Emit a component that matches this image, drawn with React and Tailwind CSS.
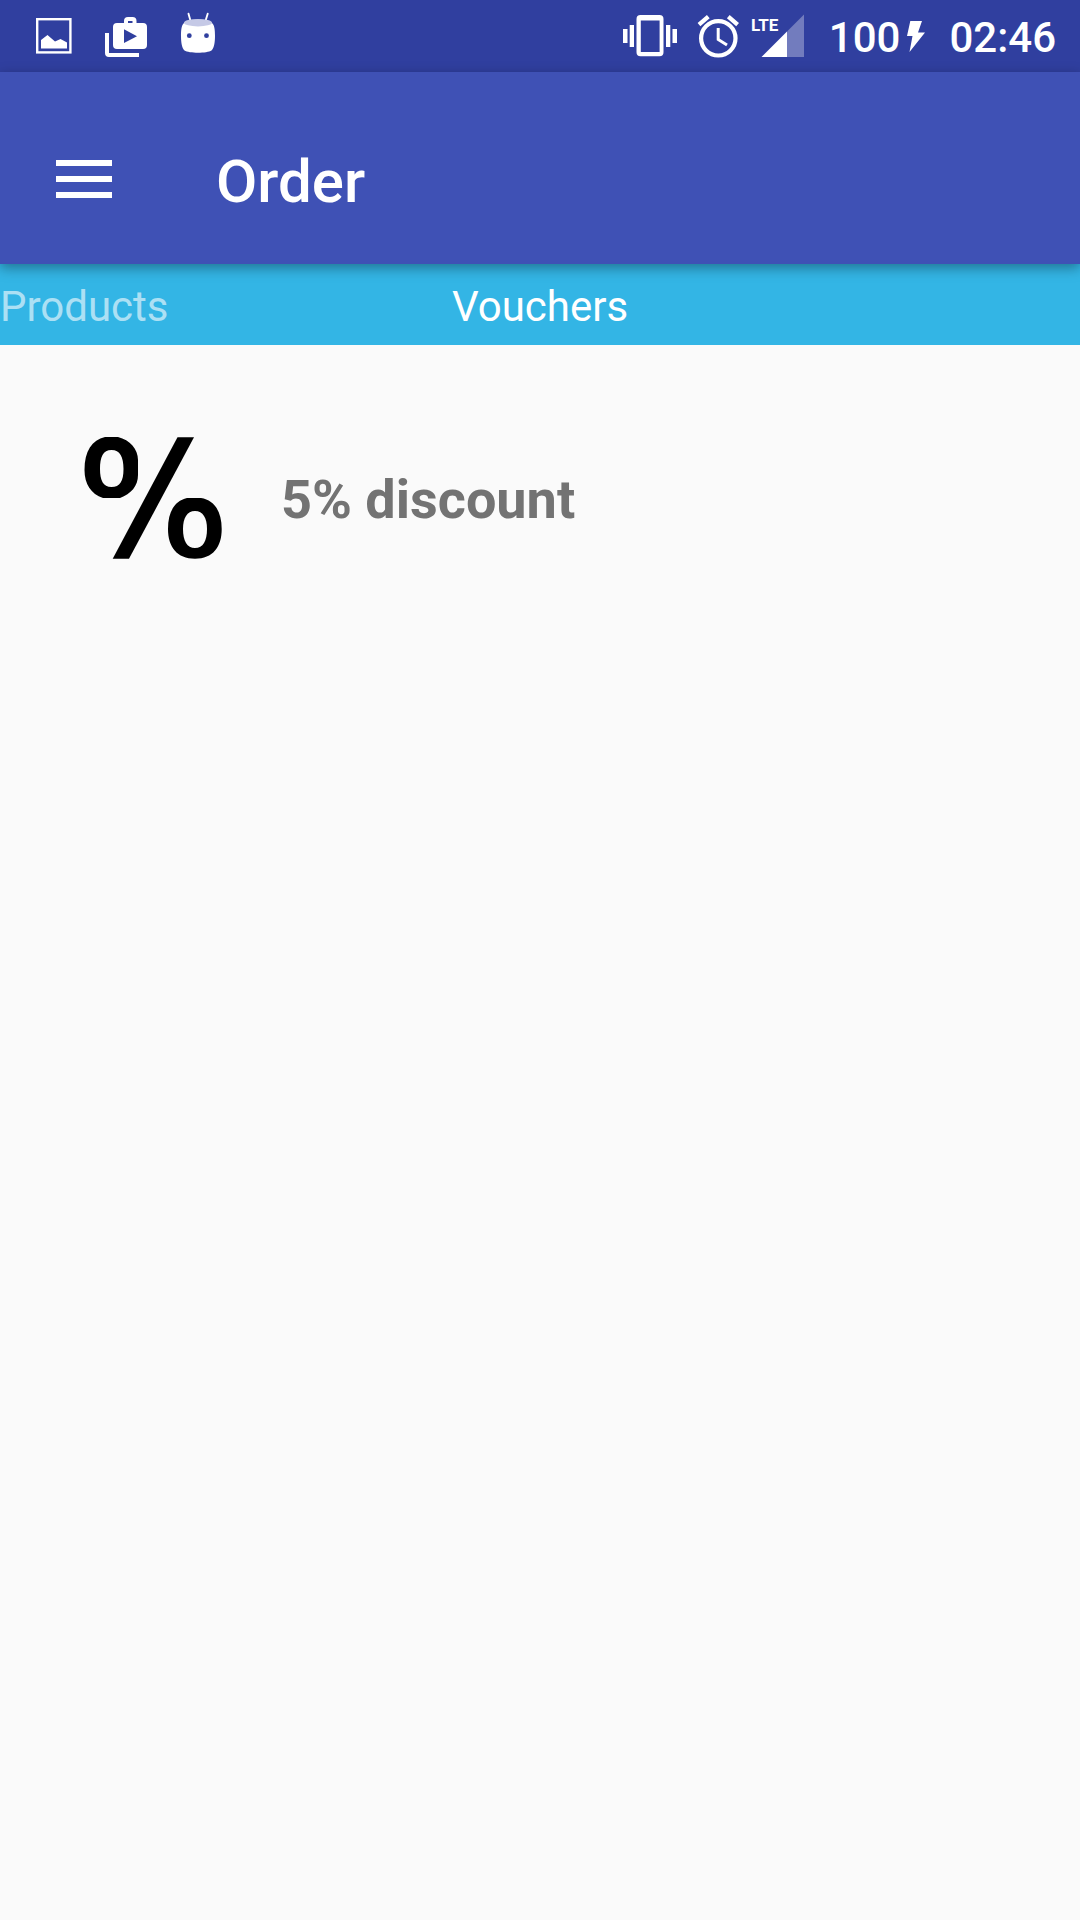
import React from "react";

function ImageIcon() {
  return (
    <svg className="h-12 w-12" viewBox="0 0 48 48" fill="none" aria-hidden="true">
      <rect x="7.2" y="7.2" width="33.2" height="33.2" stroke="#fff" strokeWidth="2.4" />
      <path d="M11 36.5V28L17.5 23L25 29.5L30.5 27L37 30.5V36.5Z" fill="#fff" />
    </svg>
  );
}

function ShopIcon() {
  return (
    <svg className="h-12 w-12" viewBox="0 0 48 48" fill="#fff" aria-hidden="true">
      <path d="M3 21H7V41H37V45H7A4 4 0 0 1 3 41Z" />
      <path
        fillRule="evenodd"
        d="M22 11V9A4 4 0 0 1 26 5H30.5A4 4 0 0 1 34.5 9V11H41A4 4 0 0 1 45 15V33A4 4 0 0 1 41 37H15A4 4 0 0 1 11 33V15A4 4 0 0 1 15 11ZM26 9V11H30.5V9ZM22 17.3V31L35 24.2Z"
      />
    </svg>
  );
}

function RobotIcon() {
  return (
    <svg className="h-12 w-12" viewBox="0 0 48 48" aria-hidden="true">
      <path d="M16.7 9.5L14.5 1.7M31.3 9.5L33.7 1.7" stroke="#fff" strokeWidth="1.9" strokeLinecap="round" />
      <path d="M10 11C14 6.500 34 6.500 38 11C40.5 13 41 18 41 24C41 31 40 36 37.5 38.500C33 41.500 15 41.500 10.5 38.5C8 36 7 31 7 24C7 18 7.5 13 10 11Z" fill="#fff" />
      <ellipse cx="24" cy="10.7" rx="14" ry="3.7" fill="#c5c9e6" />
      <circle cx="15.3" cy="23.7" r="2.4" fill="#303f9f" />
      <circle cx="32.5" cy="23.7" r="2.4" fill="#303f9f" />
    </svg>
  );
}

function VibrateIcon() {
  return (
    <svg className="h-12 w-[54px]" viewBox="0 0 54 48" fill="#fff" aria-hidden="true">
      <path d="M0 17H4.5V31H0ZM6.7 13H11V35H6.7ZM43 13H47.3V35H43ZM49.5 17H54V31H49.5Z" />
      <path
        fillRule="evenodd"
        d="M17.5 3H36.5A4 4 0 0 1 40.5 7V40.3A4 4 0 0 1 36.5 44.3H17.5A4 4 0 0 1 13.5 40.3V7A4 4 0 0 1 17.5 3ZM17.8 8.6V40H36.6V8.6Z"
      />
    </svg>
  );
}

function AlarmIcon() {
  return (
    <svg className="h-12 w-11" viewBox="0 0 44 48" fill="none" stroke="#fff" aria-hidden="true">
      <circle cx="21.3" cy="26.3" r="17.2" strokeWidth="4.2" />
      <path d="M21.2 16V27.5L30 33" strokeWidth="3" />
      <path d="M2 12.7L11.3 4.6M31.3 4.6L40.6 12.7" strokeWidth="4.2" />
    </svg>
  );
}

function SignalIcon() {
  return (
    <svg className="h-12 w-[54px]" viewBox="0 0 54 48" role="img" aria-label="LTE signal">
      <path d="M53 2.5V45H36V19.5Z" fill="#fff" fillOpacity="0.32" />
      <path d="M10.5 45L36 19.5V45Z" fill="#fff" />
      <text x="0" y="19" fill="#fff" className="text-[17px] font-bold">
        LTE
      </text>
    </svg>
  );
}

function BoltIcon() {
  return (
    <svg className="h-12 w-[18px]" viewBox="0 0 18 48" fill="#fff" aria-hidden="true">
      <path d="M3.3 9H15L11 20.5H18L2.5 40L5.5 24H0Z" />
    </svg>
  );
}

function PercentIcon() {
  return (
    <svg className="size-36 shrink-0" viewBox="0 0 144 144" fill="#000" aria-hidden="true">
      <path
        fillRule="evenodd"
        d="M24 11H37C49 14 57 23 57 34V49C57 60 50 68 39 72H22C10 68 3.5 58 3.5 44C3.5 25 11 14 24 11ZM30.5 24C22 24 19 31 19 43C19 54 22 61 30.5 61C39 61 42.5 55 42.5 43C42.5 31 39 24 30.5 24Z"
      />
      <path d="M96.5 11.3H113L48 132.7H31.7Z" />
      <path
        fillRule="evenodd"
        d="M106 72H120C133 74 140.7 85 140.7 103C140.7 121 132 132.7 114 132.7C96 132.7 87 121 87 103C87 85 94 75 106 72ZM114 85C106 85 102 92 102 103C102 115 106 122 114 122C122 122 126 115 126 103C126 92 122 85 114 85Z"
      />
    </svg>
  );
}

function StatusBar() {
  return (
    <div className="flex h-[72px] items-center justify-between bg-[#303f9f] pr-6 pl-[30px] text-[42px] leading-[48px] font-medium text-white">
      <div className="flex gap-6">
        <ImageIcon />
        <ShopIcon />
        <RobotIcon />
      </div>
      <div className="flex items-center">
        <VibrateIcon />
        <div className="ml-5 flex gap-2.5">
          <AlarmIcon />
          <SignalIcon />
        </div>
        <span className="mt-1 ml-6">100</span>
        <span className="mr-6 ml-[7px]">
          <BoltIcon />
        </span>
        <span className="mt-1">02:46</span>
      </div>
    </div>
  );
}

function AppBar() {
  return (
    <header className="relative z-10 flex h-48 items-center bg-[#3f51b5] pt-6 pl-14 text-white shadow-[0_4px_12px_rgba(0,0,0,0.36)]">
      <button type="button" aria-label="Open menu">
        <svg className="h-[72px] w-14" viewBox="0 0 56 72" fill="#fff" aria-hidden="true">
          <path d="M0 16H56V22H0ZM0 32H56V38H0ZM0 48H56V54H0Z" />
        </svg>
      </button>
      <h1 className="ml-[104px] pt-1 text-[60px] leading-[72px] font-medium">Order</h1>
    </header>
  );
}

export default function App() {
  return (
    <div className="min-h-screen bg-[#fafafa] font-['Roboto',sans-serif]">
      <StatusBar />
      <AppBar />
      <nav className="grid h-[81px] grid-cols-3 items-center bg-[#33b5e5] pt-1 text-[42px] leading-[48px]">
        <button type="button" className="justify-self-start text-white/60">Products</button>
        <button type="button" aria-current="page" className="justify-self-center text-white">Vouchers</button>
      </nav>
      <main>
        <ul>
          <li className="flex items-center pt-[81px] pl-[81px]">
            <PercentIcon />
            <span className="ml-14 pt-1 text-[54px] leading-[64px] font-bold text-[#737373]">5% discount</span>
          </li>
        </ul>
      </main>
    </div>
  );
}
